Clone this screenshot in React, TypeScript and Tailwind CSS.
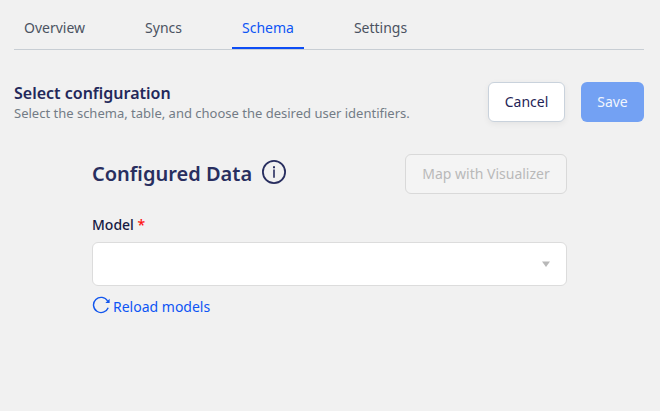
function InfoIcon() {
  return (
    <svg className="mb-[4px] size-[24px]" viewBox="0 0 24 24" fill="none" stroke="#282e5f">
      <circle cx="12" cy="12" r="11.1" strokeWidth="1.8" />
      <path d="M12 9.5v8.3" strokeWidth="1.6" />
      <path d="M12 6.2v2" strokeWidth="2" />
    </svg>
  );
}

function ReloadIcon() {
  return (
    <svg className="mb-[4px] size-[18px]" viewBox="0 0 18 18" fill="none" stroke="#1256ed" strokeWidth="1.4">
      <path d="M16.2 11.7A7.6 7.6 0 1 1 15.6 5" />
      <path d="M17.6 2.8v4.2h-4.2z" fill="#1256ed" stroke="none" />
    </svg>
  );
}

export default function App() {
  return (
    <div className="h-[411px] w-[660px] overflow-hidden bg-[#f1f1f1] px-[14px] font-['Noto_Sans',sans-serif] text-[14px] leading-[20px] text-[#1f2456]">
      <nav className="mr-[2px] flex h-[50px] gap-[40px] border-b border-[#c8ced4] text-[#4b5361]">
        <a className="flex h-[49px] items-center px-[10px] pt-[6px]">Overview</a>
        <a className="flex h-[49px] items-center px-[10px] pt-[6px]">Syncs</a>
        <a className="flex h-[49px] items-center border-b-2 border-[#0d4df5] px-[10px] pt-[8px] text-[#0d55f5]">Schema</a>
        <a className="flex h-[49px] items-center px-[10px] pt-[6px]">Settings</a>
      </nav>
      <header className="mt-[32px] mr-[2px] flex h-[40px] items-center justify-between">
        <div className="pb-[1px]">
          <h1 className="text-[16px] leading-[22px] font-semibold text-[#23285a]">Select configuration</h1>
          <p className="text-[13px] leading-[18px] text-[#737c86]">Select the schema, table, and choose the desired user identifiers.</p>
        </div>
        <div className="flex gap-[16px]">
          <button className="h-[40px] w-[77px] rounded-[6px] border border-[#c9d2dc] bg-white shadow-[0_2px_6px_rgba(0,0,0,0.06)]">Cancel</button>
          <button className="h-[40px] w-[63px] rounded-[6px] bg-[#73a1f3] text-[#f1f5fd]">Save</button>
        </div>
      </header>
      <main className="mt-[32px] ml-[78px] w-[475px]">
        <div className="flex h-[40px] items-center justify-between">
          <div className="flex items-center gap-[10px]">
            <h2 className="text-[20px] leading-[28px] font-semibold text-[#282e5f]">Configured Data</h2>
            <InfoIcon />
          </div>
          <button className="h-[40px] w-[162px] rounded-[6px] border border-[#d9d9d9] bg-[#f4f4f4] text-[#b9b9b9]">Map with Visualizer</button>
        </div>
        <label className="mt-[21px] block font-medium text-[#161a43]">
          Model <span className="text-[#ff1010]">*</span>
        </label>
        <div className="mt-[7px] flex h-[44px] items-center justify-end rounded-[6px] border border-[#dcdcdc] bg-white pr-[16px]">
          <svg className="h-[6px] w-[8px]" viewBox="0 0 8 6"><path d="M0 .5h8L4 6z" fill="#b8b8b8" /></svg>
        </div>
        <a className="mt-[11px] flex h-[20px] items-center gap-[3px] text-[#0d55f5]">
          <ReloadIcon />
          Reload models
        </a>
      </main>
    </div>
  );
}
